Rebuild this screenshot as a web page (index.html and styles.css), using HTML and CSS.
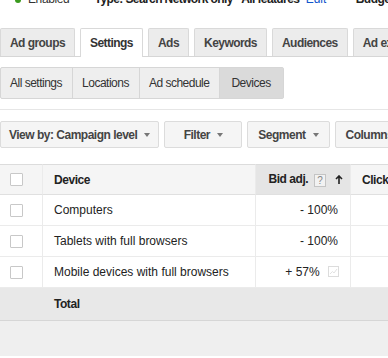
FILE: index.html
```
<!DOCTYPE html>
<html>
<head>
    <meta charset="UTF-8">
    <title>Campaign settings - Devices</title>
    <link rel="stylesheet" href="styles.css">
</head>
<body>
<div class="status">
    <span class="dot"></span><span class="enabled">Enabled</span>
    <span class="type">Type: Search Network only - All features</span>
    <a class="edit">Edit</a>
    <span class="budget">Budget: $5.00/day</span>
</div>

<div class="tabs">
    <div class="tab">Ad groups</div>
    <div class="tab tab-active">Settings</div>
    <div class="tab">Ads</div>
    <div class="tab">Keywords</div>
    <div class="tab">Audiences</div>
    <div class="tab">Ad extensions</div>
</div>

<div class="subnav">
    <div class="subtabs">
        <div class="subtab">All settings</div>
        <div class="subtab">Locations</div>
        <div class="subtab">Ad schedule</div>
        <div class="subtab subtab-active">Devices</div>
    </div>
</div>

<div class="toolbar">
    <div class="btn btn-view">View by: Campaign level <span class="caret"></span></div>
    <div class="btn btn-filter">Filter <span class="caret"></span></div>
    <div class="btn">Segment <span class="caret"></span></div>
    <div class="btn">Columns <span class="caret"></span></div>
</div>

<table class="grid">
    <colgroup>
        <col class="c-check">
        <col class="c-device">
        <col class="c-bid">
        <col class="c-clicks">
    </colgroup>
    <thead>
        <tr>
            <th class="check"><span class="box"></span></th>
            <th>Device</th>
            <th class="bid sorted">Bid adj. <span class="help">?</span>
                <svg class="arrow" width="8" height="9" viewBox="0 0 8 9"><path d="M4 1 L4 9 M1 4 L4 1 L7 4" fill="none" stroke="#222" stroke-width="1.6"/></svg>
            </th>
            <th class="clicks">Clicks</th>
        </tr>
    </thead>
    <tbody>
        <tr>
            <td class="check"><span class="box"></span></td>
            <td>Computers</td>
            <td class="bid">- 100%</td>
            <td class="clicks"></td>
        </tr>
        <tr>
            <td class="check"><span class="box"></span></td>
            <td>Tablets with full browsers</td>
            <td class="bid">- 100%</td>
            <td class="clicks"></td>
        </tr>
        <tr>
            <td class="check"><span class="box"></span></td>
            <td>Mobile devices with full browsers</td>
            <td class="bid bid-chart">+ 57% <svg class="chart" width="11" height="11" viewBox="0 0 11 11"><rect x="0.5" y="0.5" width="10" height="10" fill="#fff" stroke="#dcdcdc"/><path d="M2 8 L4.5 5.5 L6 7 L9 3" fill="none" stroke="#e2e2e2"/></svg></td>
            <td class="clicks"></td>
        </tr>
        <tr class="total">
            <td class="check"></td>
            <td>Total</td>
            <td></td>
            <td></td>
        </tr>
    </tbody>
</table>
<div class="footer-band"></div>
</body>
</html>
```

FILE: styles.css
```
body {
    margin: 0px;
    font-family: 'Liberation Sans', Arial, sans-serif;
    color: #222;
    background-color: #fff;
    overflow: hidden;
}
.status {
    height: 16px;
    margin-top: -9px;
    line-height: 16px;
    font-size: 12px;
    white-space: nowrap;
    padding-left: 15px;
}
.dot {
    display: inline-block;
    width: 6px;
    height: 6px;
    border-radius: 3px;
    background-color: #3a9a1e;
    margin-right: 7px;
}
.enabled {
    color: #333;
    margin-right: 22px;
    letter-spacing: -0.4px;
}
.type {
    font-weight: bold;
    letter-spacing: -0.6px;
}
.edit {
    color: #1155cc;
    margin: 0 26px 0 3px;
}
.budget {
    font-weight: bold;
    letter-spacing: -0.5px;
}

/* main tabs */
.tabs {
    display: flex;
    align-items: flex-end;
    gap: 5px;
    padding-top: 21px;
    border-bottom: 1px solid #d6d6d6;
    white-space: nowrap;
}
.tab {
    height: 27px;
    line-height: 28px;
    padding: 0 9px;
    border: 1px solid #d9d9d9;
    border-bottom: none;
    border-radius: 2px 2px 0 0;
    background-color: #ececec;
    color: #444;
    font-size: 12px;
    font-weight: bold;
    letter-spacing: -0.55px;
    flex-shrink: 0;
}
.tab-active {
    height: 28px;
    margin-bottom: -1px;
    background-color: #fff;
    color: #333;
}

/* sub tabs */
.subnav {
    padding: 10px 0 10px 0;
    border-bottom: 1px solid #e6e6e6;
}
.subtabs {
    display: inline-flex;
    border: 1px solid #d6d6d6;
    border-radius: 2px;
    background-color: #eee;
}
.subtab {
    height: 30px;
    line-height: 30px;
    padding: 0 10px 0 9px;
    font-size: 12px;
    letter-spacing: -0.5px;
    color: #333;
}
.subtab + .subtab {
    border-left: 1px solid #d6d6d6;
}
.subtab-active {
    padding: 0 12px 0 11px;
    background-color: #dadada;
}

/* toolbar */
.toolbar {
    display: flex;
    gap: 5px;
    padding-top: 11px;
    white-space: nowrap;
}
.btn {
    display: flex;
    align-items: center;
    justify-content: center;
    gap: 7px;
    flex-shrink: 0;
    height: 25px;
    padding: 0 10px;
    border: 1px solid #dcdcdc;
    border-radius: 2px;
    background-color: #f5f5f5;
    color: #444;
    font-size: 12px;
    font-weight: bold;
    letter-spacing: -0.5px;
}
.btn-view {
    padding: 0 8px;
}
.btn-filter {
    width: 56px;
}
.caret {
    display: inline-block;
    width: 0;
    height: 0;
    border-left: 3px solid transparent;
    border-right: 3px solid transparent;
    border-top: 4px solid #777;
}

/* table */
.grid {
    margin-top: 16px;
    width: 460px;
    table-layout: fixed;
    border-collapse: separate;
    border-spacing: 0;
    font-size: 12px;
}
.c-check { width: 43px; }
.c-device { width: 212px; }
.c-bid { width: 96px; }
.c-clicks { width: 109px; }
.grid th, .grid td {
    box-sizing: border-box;
    height: 31px;
    padding: 0 0 0 11px;
    border-bottom: 1px solid #ebebeb;
    text-align: left;
    white-space: nowrap;
}
.grid th {
    height: 31px;
    border-top: 1px solid #dcdcdc;
    border-bottom: 1px solid #e0e0e0;
    background-color: #f5f5f5;
    font-weight: bold;
    letter-spacing: -0.45px;
    color: #222;
}
.grid .check {
    padding: 0 0 0 10px;
    border-right: 1px solid #ebebeb;
}
.box {
    display: block;
    width: 11px;
    height: 11px;
    border: 1px solid #c8c8c8;
    border-radius: 1px;
    background-color: #fff;
}
.grid .bid {
    padding: 0 12px 0 0;
    text-align: right;
    border-left: 1px solid #ebebeb;
    border-right: 1px solid #ebebeb;
}
.grid th.sorted {
    padding-right: 7px;
    background-color: #e5e5e5;
}
.grid .bid-chart {
    padding-right: 11px;
}
.help {
    display: inline-block;
    width: 10px;
    height: 11px;
    line-height: 11px;
    margin: 0 6px 0 3px;
    border: 1px solid #c4c4c4;
    background-color: #f2f2f2;
    color: #888;
    font-size: 10px;
    font-weight: normal;
    text-align: center;
    letter-spacing: 0;
    vertical-align: -1px;
}
.arrow {
    vertical-align: -1px;
}
.chart {
    margin-left: 5px;
    vertical-align: -1px;
}
.grid .clicks {
    padding-left: 11px;
}
.grid .total td {
    height: 33px;
    background-color: #e8e8e8;
    border-bottom: 1px solid #d6d6d6;
    border-left: none;
    border-right: none;
    font-weight: bold;
    letter-spacing: -0.45px;
}
.footer-band {
    height: 35px;
    background-color: #efefef;
}
```
